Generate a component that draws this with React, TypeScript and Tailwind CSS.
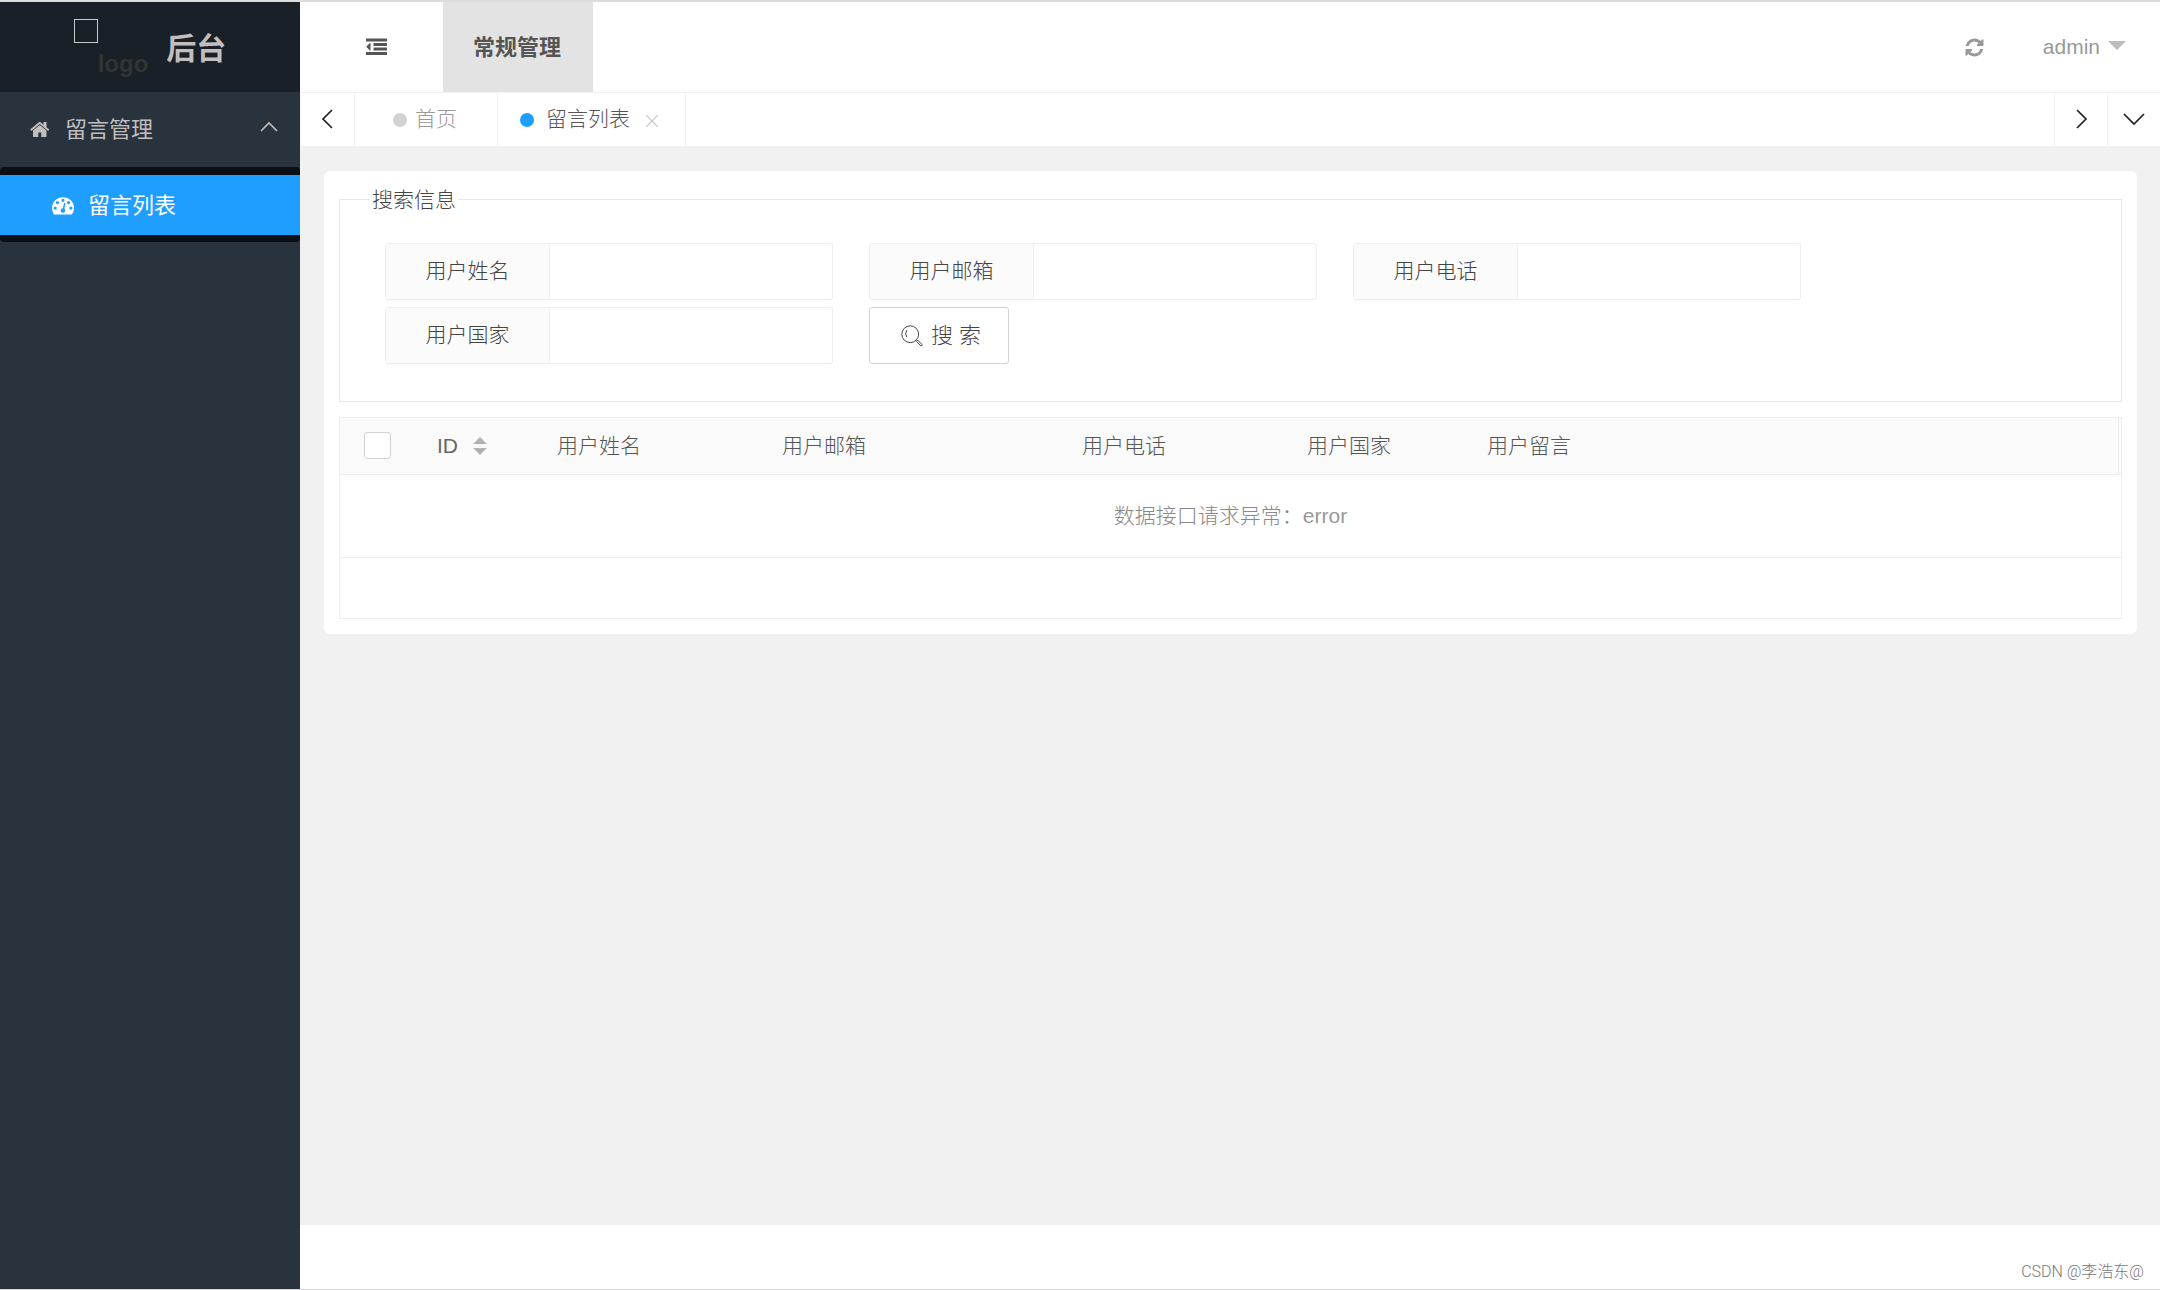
import { useState } from 'react';
import type { ReactNode } from 'react';

const searchFields = [
  { id: 'name', label: '用户姓名' },
  { id: 'email', label: '用户邮箱' },
  { id: 'phone', label: '用户电话' },
  { id: 'country', label: '用户国家' },
];

const columns = ['用户姓名', '用户邮箱', '用户电话', '用户国家', '用户留言'];

const OUTDENT =
  'M384 544v576q0 13-9.5 22.5t-22.5 9.5q-14 0-23-9l-288-288q-9-9-9-23t9-23l288-288q9-9 23-9 13 0 22.5 9.5t9.5 22.5zm1408 768v192q0 13-9.5 22.5t-22.5 9.5h-1728q-13 0-22.5-9.5t-9.5-22.5v-192q0-13 9.5-22.5t22.5-9.5h1728q13 0 22.5 9.5t9.5 22.5zm0-384v192q0 13-9.5 22.5t-22.5 9.5h-1088q-13 0-22.5-9.5t-9.5-22.5v-192q0-13 9.5-22.5t22.5-9.5h1088q13 0 22.5 9.5t9.5 22.5zm0-384v192q0 13-9.5 22.5t-22.5 9.5h-1088q-13 0-22.5-9.5t-9.5-22.5v-192q0-13 9.5-22.5t22.5-9.5h1088q13 0 22.5 9.5t9.5 22.5zm0-384v192q0 13-9.5 22.5t-22.5 9.5h-1728q-13 0-22.5-9.5t-9.5-22.5v-192q0-13 9.5-22.5t22.5-9.5h1728q13 0 22.5 9.5t9.5 22.5z';
const HOME =
  'M1408 992v480q0 26-19 45t-45 19h-384v-384h-256v384h-384q-26 0-45-19t-19-45v-480q0-1 .5-3t.5-3l575-474 575 474q1 2 1 6zm223-69l-62 74q-8 9-21 11h-3q-13 0-21-7l-692-577-692 577q-12 8-24 7-13-2-21-11l-62-74q-8-10-7-23.5t11-21.5l719-599q32-26 76-26t76 26l244 204v-195q0-14 9-23t23-9h192q14 0 23 9t9 23v408l219 182q10 8 11 21.5t-7 23.5z';
const GAUGE =
  'M384 1152q0-53-37.5-90.5t-90.5-37.5-90.5 37.5-37.5 90.5 37.5 90.5 90.5 37.5 90.5-37.5 37.5-90.5zm192-448q0-53-37.5-90.5t-90.5-37.5-90.5 37.5-37.5 90.5 37.5 90.5 90.5 37.5 90.5-37.5 37.5-90.5zm428 481l101-382q6-26-7.5-48.5t-38.5-29.5-48 6.5-30 39.5l-101 382q-60 5-107 43.5t-63 98.5q-20 77 20 146t117 89 146-20 89-117q16-60-6-117t-72-91zm660-33q0-53-37.5-90.5t-90.5-37.5-90.5 37.5-37.5 90.5 37.5 90.5 90.5 37.5 90.5-37.5 37.5-90.5zm-640-640q0-53-37.5-90.5t-90.5-37.5-90.5 37.5-37.5 90.5 37.5 90.5 90.5 37.5 90.5-37.5 37.5-90.5zm448 192q0-53-37.5-90.5t-90.5-37.5-90.5 37.5-37.5 90.5 37.5 90.5 90.5 37.5 90.5-37.5 37.5-90.5zm320 448q0 261-141 483-19 29-54 29h-1402q-35 0-54-29-141-221-141-483 0-182 71-348t191-286 286-191 348-71 348 71 286 191 191 286 71 348z';
const REFRESH =
  'M1639 1056q0 5-1 7-64 268-268 434.5t-478 166.5q-146 0-282.5-55t-243.5-157l-129 129q-19 19-45 19t-45-19-19-45v-448q0-26 19-45t45-19h448q26 0 45 19t19 45-19 45l-137 137q71 66 161 102t187 36q134 0 250-65t186-179q11-17 53-117 8-23 30-23h192q13 0 22.5 9.5t9.5 22.5zm25-800v448q0 26-19 45t-45 19h-448q-26 0-45-19t-19-45 19-45l138-138q-148-137-349-137-134 0-250 65t-186 179q-11 17-53 117-8 23-30 23h-199q-13 0-22.5-9.5t-9.5-22.5v-7q65-268 270-434.5t480-166.5q146 0 284 55.5t245 156.5l130-129q19-19 45-19t45 19 19 45z';

function Glyph({ d, className }: { d: string; className: string }) {
  return (
    <svg viewBox="0 0 1792 1792" fill="currentColor" className={className} aria-hidden="true">
      <path d={d} />
    </svg>
  );
}

function Chevron({ points, className }: { points: string; className: string }) {
  return (
    <svg viewBox="0 0 22 22" fill="none" stroke="currentColor" strokeWidth="1.7" className={className} aria-hidden="true">
      <polyline points={points} />
    </svg>
  );
}

function Sidebar() {
  return (
    <aside className="w-[300px] shrink-0 bg-[#28333e] text-[#c2bebe]">
      <a href="#home" className="flex h-[90px] justify-center bg-[#192027] font-bold">
        <span className="mt-[17px] size-6 border border-[#c8c8c8]" />
        <span className="mt-[44px] text-2xl leading-9 text-[#333]">logo</span>
        <h1 className="ml-[18px] text-[30px] leading-[94px]">后台</h1>
      </a>
      <nav>
        <a href="#message" className="flex h-[75px] items-center pr-5 pl-[30px] text-[22px]">
          <Glyph d={HOME} className="size-[21px]" />
          <span className="ml-[14px] grow">留言管理</span>
          <Chevron points="3,12 11,4 19,12" className="size-[22px]" />
        </a>
        <div className="rounded bg-[#0c0f13] pt-2 pb-[7px]">
          <a href="#list" className="flex h-[60px] items-center bg-[#1e9fff] pl-[52px] text-[22px] text-white">
            <Glyph d={GAUGE} className="size-[22px]" />
            <span className="ml-[14px]">留言列表</span>
          </a>
        </div>
      </nav>
    </aside>
  );
}

function Header() {
  return (
    <header className="flex h-[90px] items-center">
      <button type="button" aria-label="收起菜单" className="flex h-full w-[143px] items-center justify-center pl-[10px] text-[#555]">
        <Glyph d={OUTDENT} className="size-[21px]" />
      </button>
      <button type="button" className="h-full w-[150px] bg-[#e3e3e3] pr-[2px] text-[22px] font-bold text-[#555]">
        常规管理
      </button>
      <button type="button" aria-label="刷新" className="ml-auto text-[#999]">
        <Glyph d={REFRESH} className="size-[21px]" />
      </button>
      <button type="button" className="mr-[34px] ml-[58px] flex items-center gap-2 text-[21px] text-[#999]">
        admin
        <svg viewBox="0 0 18 9" className="mb-1 h-[9px] w-[18px] fill-[#bcbcbc]" aria-hidden="true">
          <path d="M0 0h18l-9 9z" />
        </svg>
      </button>
    </header>
  );
}

function Tab({ dot, active, children }: { dot: string; active?: boolean; children: ReactNode }) {
  return (
    <li className={active ? 'flex items-center border-r border-[#f2f2f2] pr-[27px] pl-[22px] text-[#555]' : 'flex items-center border-r border-[#f2f2f2] pr-10 pl-[38px] text-[#999]'}>
      <span className={`size-[14px] rounded-full ${dot}`} />
      {children}
    </li>
  );
}

function TabBar() {
  return (
    <div className="flex h-[55px] border-y border-l border-[#f2f2f2] text-[21px] text-[#222]">
      <button type="button" aria-label="上一个" className="flex w-[54px] items-center justify-center border-r border-[#f2f2f2] pb-[2px]">
        <Chevron points="15,2 6,11 15,20" className="size-[22px]" />
      </button>
      <ul className="flex grow font-light">
        <Tab dot="bg-[#d2d2d2]">
          <a href="#home" className="ml-2 pb-[2px]">首页</a>
        </Tab>
        <Tab dot="bg-[#1e9fff]" active>
          <a href="#list" className="ml-3 pb-[2px]">留言列表</a>
          <button type="button" aria-label="关闭" className="mt-[3px] ml-4 text-[#c2c2c2]">
            <svg viewBox="0 0 12 12" className="size-3" stroke="currentColor" strokeWidth="1.2" aria-hidden="true">
              <path d="M0 0l12 12M12 0L0 12" />
            </svg>
          </button>
        </Tab>
      </ul>
      <button type="button" aria-label="下一个" className="flex w-[53px] items-center justify-center border-l border-[#f2f2f2] pb-[2px]">
        <Chevron points="7,2 16,11 7,20" className="size-[22px]" />
      </button>
      <button type="button" aria-label="页签操作" className="flex w-[53px] items-center justify-center border-l border-[#f2f2f2] pb-[2px]">
        <Chevron points="1,6 11,16 21,6" className="size-[22px]" />
      </button>
    </div>
  );
}

function SearchForm() {
  return (
    <fieldset className="border border-[#e6e6e6] px-[30px] pt-[30px] pb-[37px] font-light text-[#444]">
      <legend className="px-[2px] leading-[27px]">搜索信息</legend>
      <form className="flex flex-wrap gap-x-9 gap-y-[7px] px-[15px]" onSubmit={(e) => e.preventDefault()}>
        {searchFields.map((field) => (
          <div key={field.id} className="flex h-[57px] w-[448px] overflow-hidden rounded-[3px] border border-[#eee]">
            <label htmlFor={field.id} className="flex w-[163px] shrink-0 items-center justify-center bg-[#fbfbfb] pb-[2px]">
              {field.label}
            </label>
            <input id={field.id} type="text" className="min-w-0 grow border-l border-[#eee] px-4 outline-none" />
          </div>
        ))}
        <button type="submit" className="flex h-[57px] w-[140px] items-center justify-center gap-2 rounded-[3px] border border-[#d2d2d2] pl-1 text-[22px]">
          <svg viewBox="0 0 22 22" className="size-[22px]" fill="none" stroke="currentColor" strokeWidth="1" aria-hidden="true">
            <circle cx="9.2" cy="9.2" r="8.4" />
            <path d="M5.8 5.2q-2.4 3.6 0 7" />
            <path d="M15.4 16.4l1.3-1.3 4.4 4.4q.5 1.6-1.3 1.3z" />
          </svg>
          <span>搜 索</span>
        </button>
      </form>
    </fieldset>
  );
}

function MessageTable() {
  const [checked, setChecked] = useState(false);

  return (
    <div className="mt-[15px] border border-[#eee] pb-[60px]">
      <table className="w-full table-fixed border-collapse">
        <colgroup>
          <col className="w-[75px]" />
          <col className="w-[120px]" />
          <col className="w-[225px]" />
          <col className="w-[300px]" />
          <col className="w-[225px]" />
          <col className="w-[180px]" />
          <col />
          <col className="w-[3px]" />
        </colgroup>
        <thead>
          <tr className="h-14 border-b border-[#eee] bg-[#fafafa] text-left text-[#555]">
            <th className="pl-6">
              <input
                type="checkbox"
                aria-label="全选"
                checked={checked}
                onChange={() => setChecked(!checked)}
                className="block size-[27px] appearance-none rounded-[3px] border border-[#d2d2d2] bg-white checked:bg-[#5fb878]"
              />
            </th>
            <th className="pl-[22px] font-normal">
              <button type="button" className="flex items-center gap-[15px] text-[#666]">
                ID
                <svg viewBox="0 0 14 18" className="h-[18px] w-[14px] fill-[#b2b2b2]" aria-hidden="true">
                  <path d="M0 7l7-7 7 7zM0 11h14l-7 7z" />
                </svg>
              </button>
            </th>
            {columns.map((column) => (
              <th key={column} className="pl-[22px] font-light">{column}</th>
            ))}
            <td className="border-l border-[#eee]" />
          </tr>
        </thead>
        <tbody>
          <tr className="h-[83px] border-b border-[#eee]">
            <td colSpan={8} className="text-center font-light text-[#888]">
              数据接口请求异常：<span className="font-normal text-[#999]">error</span>
            </td>
          </tr>
        </tbody>
      </table>
    </div>
  );
}

export default function App() {
  return (
    <div className="flex min-h-screen flex-col border-t-2 border-b border-t-[#dcdcdc] border-b-[#d6d4d4] bg-white font-['Liberation_Sans','Noto_Sans_CJK_SC',sans-serif] text-[21px]">
      <div className="flex grow">
        <Sidebar />
        <div className="flex min-w-0 grow flex-col">
          <Header />
          <TabBar />
          <main className="grow bg-[#f1f1f1] pt-6 pr-[23px] pl-6">
            <div className="rounded-md bg-white p-[15px]">
              <SearchForm />
              <MessageTable />
            </div>
          </main>
          <footer className="flex h-16 items-end justify-end pr-4 pb-[5px] font-['Roboto','Noto_Sans_CJK_SC',sans-serif] text-base leading-6 font-light text-[#777]">
            CSDN @李浩东@
          </footer>
        </div>
      </div>
    </div>
  );
}
